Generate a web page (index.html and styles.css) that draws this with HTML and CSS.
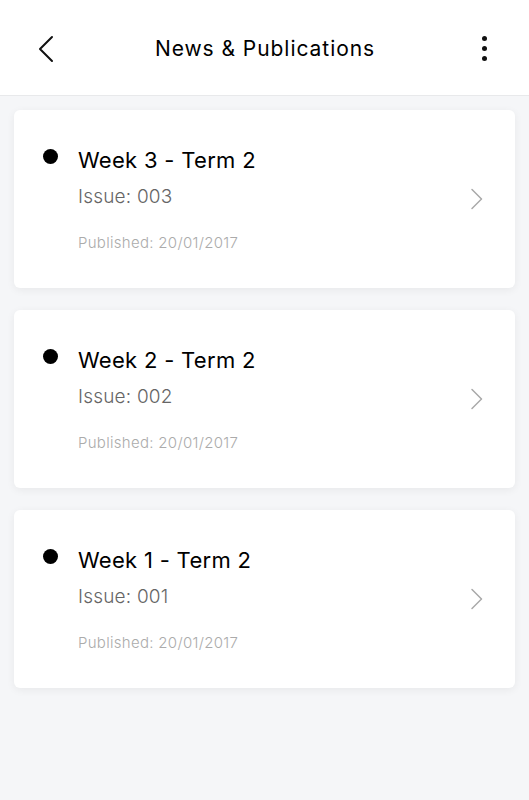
FILE: index.html
```html
<!DOCTYPE html>
<html>
<head>
<meta charset="utf-8">
<link rel="stylesheet" href="styles.css">
</head>
<body>
<header class="topbar">
  <button class="icon-btn back" aria-label="Back">
    <svg width="18" height="28" viewBox="0 0 18 28"><path d="M15 2 L3 14 L15 26" fill="none" stroke="#111" stroke-width="2" stroke-linecap="round" stroke-linejoin="round"/></svg>
  </button>
  <h1 class="title">News &amp; Publications</h1>
  <button class="icon-btn more" aria-label="More">
    <span class="dot"></span><span class="dot"></span><span class="dot"></span>
  </button>
</header>
<main class="list">
  <article class="card">
    <span class="bullet"></span>
    <div class="info">
      <div class="name">Week 3 - Term 2</div>
      <div class="issue">Issue: 003</div>
      <div class="date">Published: 20/01/2017</div>
    </div>
    <svg class="chev" width="14" height="22" viewBox="0 0 14 22"><path d="M2 1.5 L11.5 11 L2 20.5" fill="none" stroke="#a9a9a9" stroke-width="1.5" stroke-linecap="round" stroke-linejoin="round"/></svg>
  </article>
  <article class="card">
    <span class="bullet"></span>
    <div class="info">
      <div class="name">Week 2 - Term 2</div>
      <div class="issue">Issue: 002</div>
      <div class="date">Published: 20/01/2017</div>
    </div>
    <svg class="chev" width="14" height="22" viewBox="0 0 14 22"><path d="M2 1.5 L11.5 11 L2 20.5" fill="none" stroke="#a9a9a9" stroke-width="1.5" stroke-linecap="round" stroke-linejoin="round"/></svg>
  </article>
  <article class="card">
    <span class="bullet"></span>
    <div class="info">
      <div class="name">Week 1 - Term 2</div>
      <div class="issue">Issue: 001</div>
      <div class="date">Published: 20/01/2017</div>
    </div>
    <svg class="chev" width="14" height="22" viewBox="0 0 14 22"><path d="M2 1.5 L11.5 11 L2 20.5" fill="none" stroke="#a9a9a9" stroke-width="1.5" stroke-linecap="round" stroke-linejoin="round"/></svg>
  </article>
</main>
</body>
</html>
```
FILE: styles.css
```css
* { box-sizing: border-box; }
html, body { margin: 0; padding: 0; }
body {
  background: #f5f6f8;
  font-family: Inter, "Noto Sans", "Liberation Sans", sans-serif;
  color: #000;
  min-height: 800px;
}
.topbar {
  height: 96px;
  background: #fff;
  border-bottom: 1px solid #e8e9eb;
  display: flex;
  align-items: center;
  justify-content: space-between;
  padding: 2px 33px 0 34px;
}
.icon-btn {
  background: none;
  border: 0;
  padding: 0;
  display: flex;
  align-items: center;
  justify-content: center;
}
.back { width: 24px; height: 30px; }
.more {
  flex-direction: column;
  gap: 5px;
  width: 24px;
  height: 30px;
}
.dot {
  width: 5px; height: 5px; border-radius: 50%; background: #111;
}
.title {
  margin: 0;
  font-size: 21px;
  font-weight: 400;
  letter-spacing: 0.95px;
  color: #000;
}
.list {
  padding: 14px 14px 0;
  display: flex;
  flex-direction: column;
  gap: 22px;
}
.card {
  background: #fff;
  border-radius: 6px;
  box-shadow: 0 2px 8px rgba(0,0,0,0.06);
  height: 178px;
  display: flex;
  align-items: center;
  padding: 0 31px 0 29px;
}
.bullet {
  width: 15px; height: 15px; border-radius: 50%; background: #000;
  align-self: flex-start;
  margin-top: 39px;
  flex: none;
}
.info {
  flex: 1;
  margin-left: 20px;
  display: flex;
  flex-direction: column;
}
.name { font-size: 22px; line-height: 28px; font-weight: 400; color: #000; letter-spacing: 0.3px; }
.issue { font-size: 19px; line-height: 24px; color: #666; margin-top: 11px; font-weight: 300; letter-spacing: 0.2px; }
.date { font-size: 15px; line-height: 20px; color: #ababab; margin-top: 24px; font-weight: 300; letter-spacing: 0.3px; }
.chev { flex: none; }
```
